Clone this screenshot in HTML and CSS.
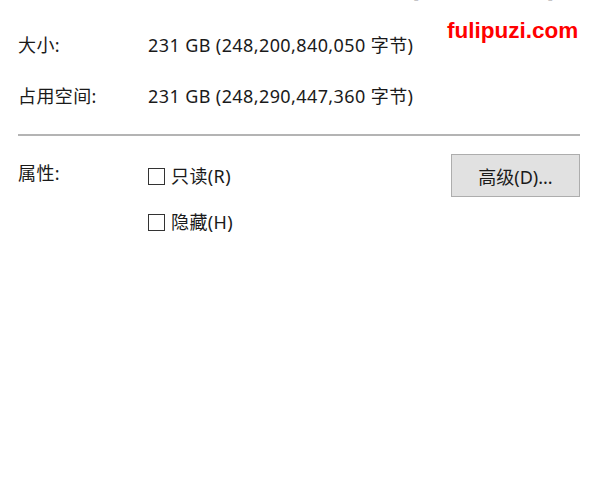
FILE: index.html
```html
<!DOCTYPE html>
<html lang="zh-CN">
<head>
    <meta charset="UTF-8">
    <title>属性</title>
    <link rel="stylesheet" href="styles.css">
</head>
<body>
    <div class="panel">
        <div class="cut">
            <div class="row">
                <span class="label">位置:</span>
                <span class="value">已压缩驱动 (C:) 已启用压缩文件 [本地磁盘驱动器]</span>
            </div>
        </div>
        <div class="row first">
            <span class="label">大小:</span>
            <span class="value">231 GB (248,200,840,050 字节)</span>
        </div>
        <div class="row">
            <span class="label">占用空间:</span>
            <span class="value">231 GB (248,290,447,360 字节)</span>
        </div>
        <div class="sep"></div>
        <div class="attrs">
            <span class="label">属性:</span>
            <div class="checks">
                <label class="check"><span class="box"></span>只读(R)</label>
                <label class="check"><span class="box"></span>隐藏(H)</label>
            </div>
            <button class="btn">高级(D)...</button>
        </div>
    </div>
    <div class="mark">fulipuzi.com</div>
</body>
</html>
```

FILE: styles.css
```css
body {
    margin: 0;
    background: #fff;
    color: #1a1a1a;
    font-family: "Noto Sans", "Noto Sans CJK SC", sans-serif;
    font-size: 18px;
    letter-spacing: 0.4px;
}
.panel {
    padding: 0 19px 0 18px;
}
.row {
    display: grid;
    grid-template-columns: 130px 1fr;
    line-height: 24px;
    margin-top: 27px;
}
.row.first {
    margin-top: 30px;
}
.cut {
    height: 3px;
    overflow: hidden;
}
.cut .row {
    margin-top: -22px;
    white-space: nowrap;
}
.sep {
    height: 2px;
    background: #b4b4b4;
    margin-top: 26px;
}
.attrs {
    display: grid;
    grid-template-columns: 130px 1fr auto;
    align-items: start;
    margin-top: 18px;
}
.attrs .label {
    line-height: 24px;
    margin-top: 7px;
}
.checks {
    display: flex;
    flex-direction: column;
    gap: 22px;
    padding-top: 10px;
}
.check {
    display: flex;
    align-items: center;
    gap: 6px;
    line-height: 24px;
}
.box {
    width: 15px;
    height: 15px;
    border: 1px solid #333;
    background: #fff;
}
.btn {
    width: 129px;
    height: 43px;
    background: #e1e1e1;
    border: 1px solid #adadad;
    font: inherit;
    color: #1a1a1a;
    padding: 0;
}
.mark {
    position: absolute;
    top: 18px;
    left: 447px;
    color: #f00;
    font-family: "Liberation Sans", Arial, sans-serif;
    font-weight: bold;
    font-size: 22.5px;
    letter-spacing: 0;
}
```
